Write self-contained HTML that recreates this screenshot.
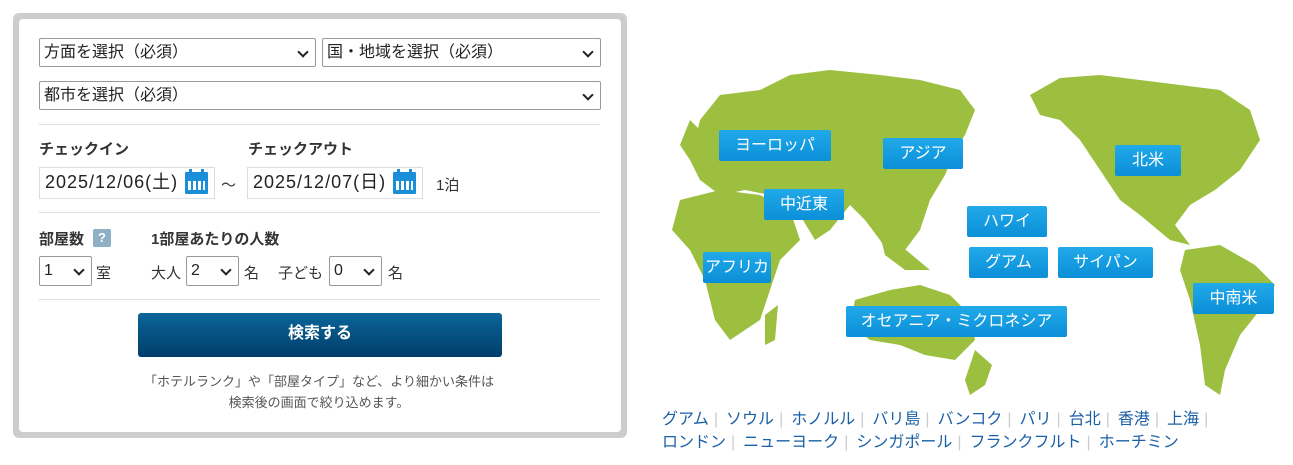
<!DOCTYPE html>
<html><head><meta charset="utf-8"><style>
*{box-sizing:border-box;margin:0;padding:0}
body{width:1293px;height:465px;background:#fff;position:relative;font-family:"Liberation Sans","Noto Sans CJK JP",sans-serif;color:#333;overflow:hidden}
.a{position:absolute}
.outer{left:13px;top:13px;width:614px;height:425px;background:#cdcdcd;border-radius:6px}
.inner{left:19px;top:19px;width:602px;height:413px;background:#fff;border-radius:4px}
.sel{position:absolute;border:1px solid #999;background:#fff;font-size:16px;line-height:27px;padding-left:4px;color:#222;border-radius:2px}
.sel:after{content:"";position:absolute;right:8px;top:9px;width:6px;height:6px;border-right:2px solid #222;border-bottom:2px solid #222;transform:rotate(45deg)}
.hr{position:absolute;left:39px;width:561px;height:1px;background:#ddd}
.b{font-weight:bold;font-size:15px;color:#333}
.date{position:absolute;border:1px solid #ddd;font-size:18px;letter-spacing:1px;line-height:29px;padding-left:5px;color:#222;height:32px;width:176px}
.cal{position:absolute;left:145px;top:4px;width:23px;height:22px;background:#1a8fd8;border-radius:1px}
.cal:before{content:"";position:absolute;left:3px;right:3px;top:9px;height:9px;background:repeating-linear-gradient(90deg,#fff 0 3px,transparent 3px 5px)}
.cal:after{content:"";position:absolute;left:4px;right:4px;top:-3px;height:5px;background:repeating-linear-gradient(90deg,#1a8fd8 0 3px,transparent 3px 12px)}
.t{font-size:15px;color:#333}
.lab{position:absolute;background:linear-gradient(#21a9e9,#0b8fd8);color:#fff;font-size:16px;text-align:center;border-radius:2px;height:31px;line-height:31px}
.links{font-size:16px;color:#1a5fa8;line-height:23px}
.links span{color:#ccc;margin:0 8px 0 5px}
</style></head><body>
<div class="a outer"></div><div class="a inner"></div>
<div class="sel" style="left:39px;top:38px;width:277px;height:29px">方面を選択（必須）</div>
<div class="sel" style="left:322px;top:38px;width:279px;height:29px">国・地域を選択（必須）</div>
<div class="sel" style="left:39px;top:81px;width:562px;height:29px">都市を選択（必須）</div>
<div class="hr" style="top:124px"></div>
<div class="a b" style="left:39px;top:138px">チェックイン</div>
<div class="a b" style="left:248px;top:138px">チェックアウト</div>
<div class="date" style="left:39px;top:167px">2025/12/06(土)<div class="cal"></div></div>
<div class="a t" style="left:221px;top:174px">～</div>
<div class="date" style="left:247px;top:167px">2025/12/07(日)<div class="cal"></div></div>
<div class="a t" style="left:436px;top:174px">1泊</div>
<div class="hr" style="top:212px"></div>
<div class="a b" style="left:39px;top:228px">部屋数</div>
<div class="a" style="left:93px;top:229px;width:18px;height:18px;background:#8fb0c4;color:#fff;font-size:13px;font-weight:bold;text-align:center;line-height:18px;border-radius:2px">?</div>
<div class="a b" style="left:151px;top:228px">1部屋あたりの人数</div>
<div class="sel" style="left:39px;top:256px;width:53px;height:30px">1</div>
<div class="a t" style="left:96px;top:262px">室</div>
<div class="a t" style="left:151px;top:262px">大人</div>
<div class="sel" style="left:186px;top:256px;width:53px;height:30px">2</div>
<div class="a t" style="left:244px;top:262px">名</div>
<div class="a t" style="left:278px;top:262px">子ども</div>
<div class="sel" style="left:329px;top:256px;width:53px;height:30px">0</div>
<div class="a t" style="left:388px;top:262px">名</div>
<div class="hr" style="top:299px"></div>
<div class="a" style="left:138px;top:313px;width:364px;height:44px;background:linear-gradient(#0a6699,#013d6b);border-radius:3px;color:#fff;font-weight:bold;font-size:16px;text-align:center;line-height:42px">検索する</div>
<div class="a" style="left:19px;top:371px;width:600px;text-align:center;font-size:13px;color:#555;line-height:21px">「ホテルランク」や「部屋タイプ」など、より細かい条件は<br>検索後の画面で絞り込めます。</div>

<svg class="a" style="left:650px;top:60px" width="640" height="345" viewBox="650 60 640 345">
<g fill="#9dbf3f">
<path d="M700 120 L720 95 L760 90 L790 75 L830 70 L880 75 L920 80 L960 90 L975 110 L965 135 L955 150 L945 175 L930 200 L920 230 L905 250 L890 255 L880 240 L865 220 L850 205 L830 230 L815 240 L800 215 L790 200 L770 195 L745 190 L720 195 L700 180 L690 160 L695 140 Z"/>
<path d="M680 200 L720 190 L760 195 L790 210 L800 240 L780 260 L770 290 L760 320 L730 340 L715 320 L705 280 L690 250 L672 230 Z"/>
<path d="M690 160 L700 130 L690 120 L680 145 Z"/>
<path d="M855 300 L890 290 L920 285 L950 295 L970 315 L975 340 L955 360 L925 355 L900 345 L870 340 L850 325 Z"/>
<path d="M975 350 L992 365 L985 385 L970 395 L965 380 Z"/>
<path d="M880 235 L900 245 L930 270 L905 270 L885 255 Z"/>
<path d="M1030 95 L1060 78 L1100 75 L1140 80 L1180 85 L1220 90 L1250 110 L1260 140 L1240 170 L1215 190 L1190 205 L1175 225 L1190 245 L1170 240 L1140 215 L1120 200 L1100 170 L1080 140 L1060 120 L1040 115 Z"/>
<path d="M1185 250 L1220 245 L1255 265 L1275 285 L1260 310 L1240 335 L1225 370 L1220 395 L1205 385 L1200 345 L1190 300 L1180 270 Z"/>
<path d="M765 315 L778 305 L775 340 L765 345 Z"/>
</g></svg>
<div class="lab" style="left:719px;top:130px;width:112px">ヨーロッパ</div>
<div class="lab" style="left:883px;top:138px;width:80px">アジア</div>
<div class="lab" style="left:764px;top:189px;width:80px">中近東</div>
<div class="lab" style="left:967px;top:206px;width:80px">ハワイ</div>
<div class="lab" style="left:969px;top:247px;width:79px">グアム</div>
<div class="lab" style="left:1058px;top:247px;width:95px">サイパン</div>
<div class="lab" style="left:703px;top:252px;width:68px">アフリカ</div>
<div class="lab" style="left:846px;top:306px;width:221px">オセアニア・ミクロネシア</div>
<div class="lab" style="left:1115px;top:145px;width:66px">北米</div>
<div class="lab" style="left:1193px;top:283px;width:81px">中南米</div>
<div class="a links" style="left:662px;top:408px;width:620px">グアム<span>|</span>ソウル<span>|</span>ホノルル<span>|</span>バリ島<span>|</span>バンコク<span>|</span>パリ<span>|</span>台北<span>|</span>香港<span>|</span>上海<span>|</span><br>ロンドン<span>|</span>ニューヨーク<span>|</span>シンガポール<span>|</span>フランクフルト<span>|</span>ホーチミン</div>
</body></html>
